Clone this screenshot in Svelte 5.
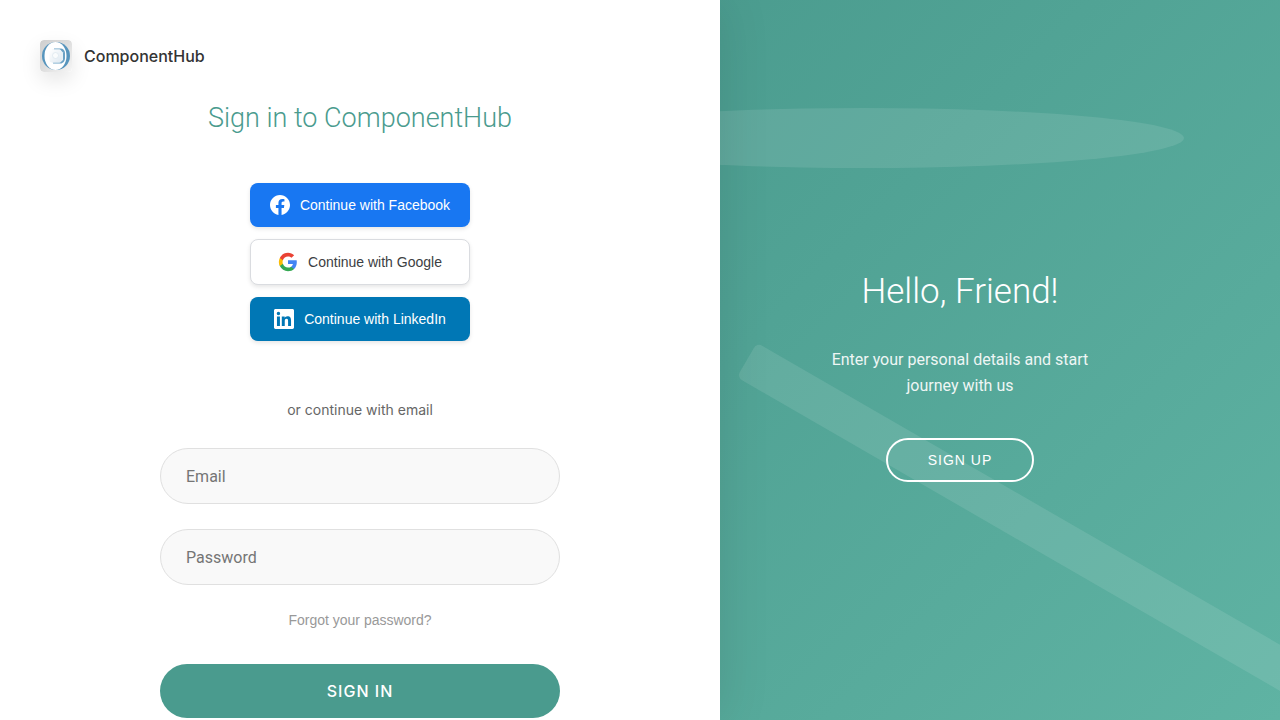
<script>
  let email = $state('');
  let password = $state('');
</script>

<main class="page">
  <section class="signin">
    <a class="brand" href="/">
      <svg class="logo" viewBox="0 0 32 32" aria-hidden="true">
        <defs>
          <linearGradient id="tile" x1="0" y1="0" x2="1" y2="1">
            <stop offset="0" stop-color="#cfcfcf" />
            <stop offset="0.5" stop-color="#dedede" />
            <stop offset="1" stop-color="#f6f6f6" />
          </linearGradient>
          <linearGradient id="face" x1="0" y1="0" x2="1" y2="1">
            <stop offset="0" stop-color="#ffffff" />
            <stop offset="1" stop-color="#dfe9f1" />
          </linearGradient>
        </defs>
        <rect width="32" height="32" rx="4" fill="url(#tile)" />
        <circle cx="16" cy="16" r="14" fill="#5795bd" />
        <ellipse cx="15.500" cy="16" rx="11" ry="14" fill="#fff" />
        <path d="M14 8.500h6.500c2.500 0 4.500 2 4.500 4.500v5c0 3-2 5.500-4.500 5.500H13z" fill="#6ba2c5" />
        <path d="M12 9.500h8l3 3v7.500l-3 2.500h-8z" fill="#e8f1f7" />
        <rect x="9.500" y="9.500" width="12" height="13" rx="2.500" fill="url(#face)" />
        <circle cx="15.500" cy="15.500" r="3" fill="#fafcfd" stroke="#d5e2eb" stroke-width="0.600" />
      </svg>
      <span>ComponentHub</span>
    </a>

    <form class="form" onsubmit={(e) => e.preventDefault()}>
      <h1>Sign in to ComponentHub</h1>

      <div class="socials">
        <button type="button" class="social facebook">
          <svg viewBox="0 0 24 24" aria-hidden="true">
            <path fill="#fff" d="M24 12.073c0-6.627-5.373-12-12-12s-12 5.373-12 12c0 5.990 4.388 10.954 10.125 11.854v-8.385H7.078v-3.470h3.047V9.430c0-3.007 1.792-4.669 4.533-4.669 1.312 0 2.686.235 2.686.235v2.953H15.830c-1.491 0-1.956.925-1.956 1.874v2.250h3.328l-.532 3.470h-2.796v8.385C19.612 23.027 24 18.062 24 12.073z" />
          </svg>
          Continue with Facebook
        </button>
        <button type="button" class="social google">
          <svg viewBox="0 0 24 24" aria-hidden="true">
            <path fill="#4285F4" d="M22.560 12.250c0-.78-.07-1.530-.2-2.250H12v4.260h5.920c-.26 1.370-1.040 2.530-2.210 3.310v2.770h3.570c2.080-1.920 3.280-4.740 3.280-8.090z" />
            <path fill="#34A853" d="M12 23c2.970 0 5.460-.98 7.280-2.660l-3.570-2.770c-.98.66-2.230 1.060-3.710 1.060-2.860 0-5.290-1.930-6.160-4.530H2.180v2.840C3.990 20.530 7.700 23 12 23z" />
            <path fill="#FBBC05" d="M5.840 14.090c-.22-.66-.35-1.360-.35-2.090s.13-1.430.35-2.090V7.070H2.180C1.430 8.550 1 10.220 1 12s.43 3.450 1.180 4.930l3.660-2.840z" />
            <path fill="#EA4335" d="M12 5.380c1.620 0 3.060.56 4.210 1.640l3.150-3.150C17.450 2.090 14.970 1 12 1 7.700 1 3.990 3.470 2.180 7.070l3.660 2.840c.87-2.600 3.300-4.530 6.160-4.530z" />
          </svg>
          Continue with Google
        </button>
        <button type="button" class="social linkedin">
          <svg viewBox="0 0 24 24" aria-hidden="true">
            <path fill="#fff" d="M20.447 20.452h-3.554v-5.569c0-1.328-.027-3.037-1.852-3.037-1.853 0-2.136 1.445-2.136 2.939v5.667H9.351V9h3.414v1.561h.046c.477-.9 1.637-1.850 3.370-1.850 3.601 0 4.267 2.370 4.267 5.455v6.286zM5.337 7.433a2.062 2.062 0 1 1 0-4.125 2.062 2.062 0 0 1 0 4.125zm1.782 13.019H3.555V9h3.564v11.452zM22.225 0H1.771C.792 0 0 .774 0 1.729v20.542C0 23.227.792 24 1.771 24h20.451C23.200 24 24 23.227 24 22.271V1.729C24 .774 23.200 0 22.222 0h.003z" />
          </svg>
          Continue with LinkedIn
        </button>
      </div>

      <p class="divider">or continue with email</p>

      <div class="fields">
        <input type="email" placeholder="Email" aria-label="Email" bind:value={email} />
        <input type="password" placeholder="Password" aria-label="Password" bind:value={password} />
      </div>

      <button type="button" class="forgot">Forgot your password?</button>
      <button type="submit" class="submit">SIGN IN</button>
    </form>
  </section>

  <aside class="welcome">
    <div class="shape oval"></div>
    <div class="shape bar"></div>
    <div class="message">
      <h2>Hello, Friend!</h2>
      <p>Enter your personal details and start journey with us</p>
      <button type="button" class="signup">SIGN UP</button>
    </div>
  </aside>
</main>

<style>
  :global(body) {
    margin: 0;
  }

  .page,
  .page * {
    box-sizing: border-box;
  }

  .page {
    display: grid;
    grid-template-columns: 1fr 1fr;
    min-height: 100vh;
    overflow: hidden;
    font-family: Roboto, 'Liberation Sans', sans-serif;
  }

  h1,
  h2,
  p {
    margin: 0;
  }

  button {
    cursor: pointer;
  }

  .brand,
  .divider,
  .submit {
    font-family: Inter, 'Liberation Sans', sans-serif;
  }

  .social,
  .forgot,
  .signup {
    font-family: 'Liberation Sans', sans-serif;
    font-size: 14px;
    line-height: 20px;
  }

  .signin {
    position: relative;
    z-index: 1;
    display: flex;
    flex-direction: column;
    gap: 30px;
    margin-right: -80px;
    padding: 40px 40px 0;
    background: #fff;
    box-shadow: 0 0 50px rgba(0, 0, 0, 0.1);
  }

  .brand {
    display: flex;
    align-items: center;
    align-self: flex-start;
    gap: 12px;
    color: #333;
    font-size: 16px;
    font-weight: 500;
    text-decoration: none;
  }

  .logo {
    width: 32px;
    height: 32px;
    border-radius: 4px;
    box-shadow: 0 8px 20px rgba(0, 0, 0, 0.1);
  }

  .form {
    display: flex;
    flex-direction: column;
    align-items: center;
    align-self: center;
    width: 100%;
    max-width: 400px;
  }

  h1 {
    color: #4a9b8e;
    font-size: 27px;
    font-weight: 300;
    line-height: 32px;
  }

  .socials {
    display: flex;
    flex-direction: column;
    gap: 12px;
    width: 220px;
    margin-top: 49px;
  }

  .social {
    display: flex;
    align-items: center;
    justify-content: center;
    gap: 10px;
    padding: 12px 16px;
    border: 0;
    border-radius: 8px;
    box-shadow: 0 2px 4px rgba(0, 0, 0, 0.1);
    color: #fff;
    white-space: nowrap;
  }

  .social svg {
    width: 20px;
    height: 20px;
  }

  .facebook {
    background: #1877f2;
  }

  .google {
    border: 1px solid #dadce0;
    background: #fff;
    color: #3c4043;
  }

  .linkedin {
    background: #0077b5;
  }

  .divider {
    margin-top: 59px;
    color: #666;
    font-size: 14px;
    line-height: 20px;
  }

  .fields {
    display: flex;
    flex-direction: column;
    gap: 25px;
    width: 100%;
    margin-top: 28px;
  }

  input {
    width: 100%;
    height: 56px;
    padding: 0 25px;
    border: 1px solid #e0e0e0;
    border-radius: 28px;
    outline: 0;
    background: #f9f9f9;
    color: #333;
    font-family: inherit;
    font-size: 16px;
  }

  input::placeholder {
    color: #757575;
  }

  .forgot {
    margin-top: 25px;
    padding: 0;
    border: 0;
    background: none;
    color: #999;
  }

  .submit {
    width: 100%;
    height: 54px;
    margin-top: 34px;
    border: 0;
    border-radius: 28px;
    background: #4a9b8e;
    color: #fff;
    font-size: 16px;
    font-weight: 500;
    letter-spacing: 1px;
  }

  .welcome {
    position: relative;
    display: flex;
    align-items: center;
    justify-content: center;
    overflow: hidden;
    background: linear-gradient(135deg, #4a9b8e, #5fb3a3);
    color: #fff;
    text-align: center;
  }

  .shape {
    position: absolute;
    width: 100%;
    background: rgba(255, 255, 255, 0.1);
  }

  .oval {
    top: 15%;
    left: -15%;
    height: 60px;
    border-radius: 50%;
  }

  .bar {
    bottom: 25%;
    left: 10%;
    height: 40px;
    border-radius: 6px;
    transform: rotate(30deg);
  }

  .message {
    position: relative;
    display: flex;
    flex-direction: column;
    align-items: center;
    max-width: 300px;
    padding-top: 32px;
  }

  h2 {
    font-size: 35px;
    font-weight: 300;
    line-height: 44px;
  }

  .message p {
    margin-top: 33px;
    font-size: 16px;
    line-height: 26px;
    opacity: 0.9;
  }

  .signup {
    height: 44px;
    margin-top: 39px;
    padding: 0 40px;
    border: 2px solid #fff;
    border-radius: 22px;
    background: transparent;
    color: #fff;
    letter-spacing: 1px;
  }
</style>
